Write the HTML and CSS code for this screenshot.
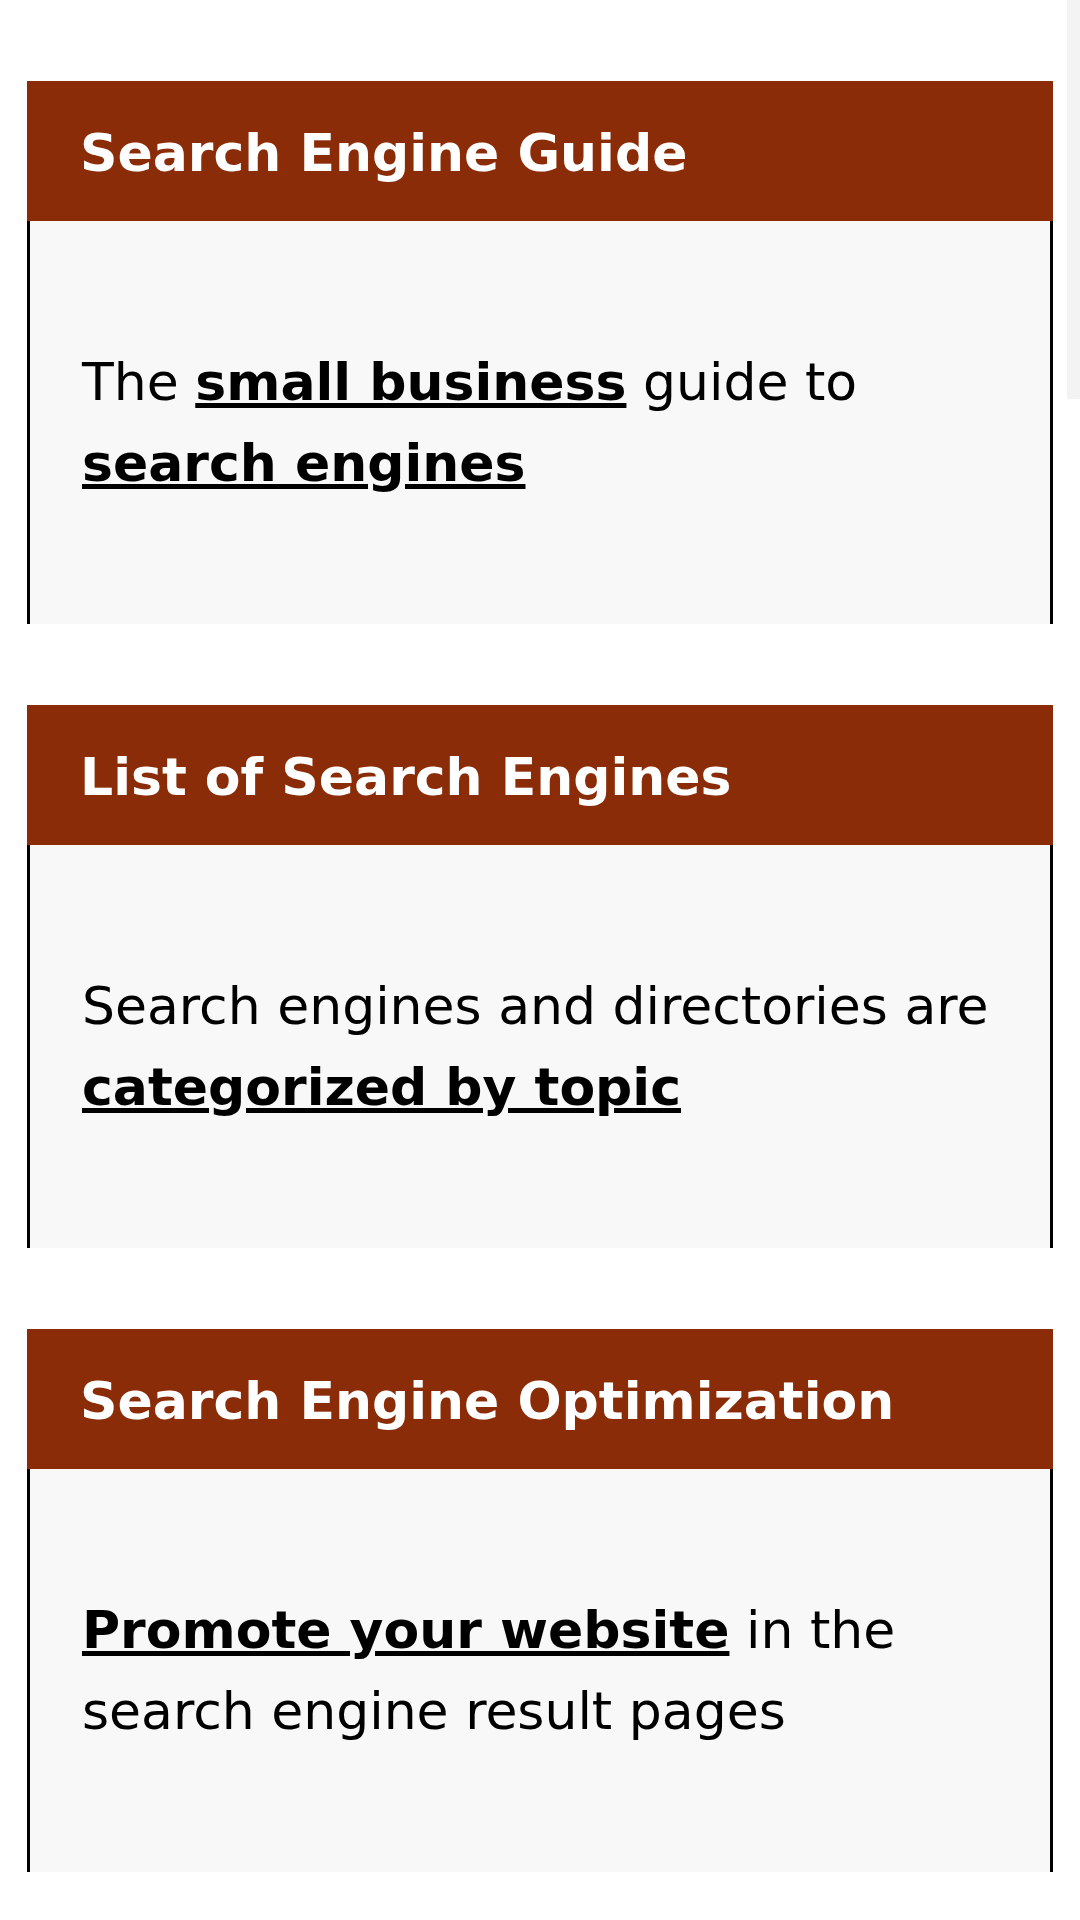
FILE: index.html
```html
<!DOCTYPE html>
<html lang="en">
<head>
  <meta charset="UTF-8" />
  <meta name="viewport" content="width=device-width, initial-scale=1.0" />
  <title>Search Engine Guide</title>
  <link rel="stylesheet" href="styles.css">
</head>
<body>

  <div class="side-strip"></div>

  <div class="cards">
    <div class="card">
      <h2 class="card-title">Search Engine Guide</h2>
      <div class="card-body">
        <p>The <a href="#">small business</a> guide to <a href="#">search engines</a></p>
      </div>
    </div>

    <div class="card">
      <h2 class="card-title">List of Search Engines</h2>
      <div class="card-body">
        <p>Search engines and directories are <a href="#">categorized by topic</a></p>
      </div>
    </div>

    <div class="card">
      <h2 class="card-title">Search Engine Optimization</h2>
      <div class="card-body">
        <p><a href="#">Promote your website</a> in the search engine result pages</p>
      </div>
    </div>
  </div>

</body>
</html>
```

FILE: styles.css
```css
* {
  margin: 0;
  padding: 0;
  box-sizing: border-box;
}
body {
  font-family: "DejaVu Sans", Verdana, sans-serif;
  background: #fff;
  color: #000;
}
/* faint strip at the right edge */
.side-strip {
  position: fixed;
  top: 0;
  right: 0;
  width: 13px;
  height: 399px;
  background: #f3f3f3;
}
.cards {
  display: flex;
  flex-direction: column;
  gap: 81px;
  padding: 81px 27px 0;
}
.card-title {
  background: #8a2c07;
  color: #fff;
  font-size: 52px;
  font-weight: bold;
  line-height: 78px;
  padding: 33px 50px 29px 53px;
}
.card-body {
  background: #f8f8f8;
  border-left: 3px solid #000;
  border-right: 3px solid #000;
  padding: 121px 47px 120px 52px;
}
.card-body p {
  font-size: 52px;
  line-height: 81px;
}
.card-body a {
  color: #000;
  font-weight: bold;
  text-decoration: underline;
}
```
